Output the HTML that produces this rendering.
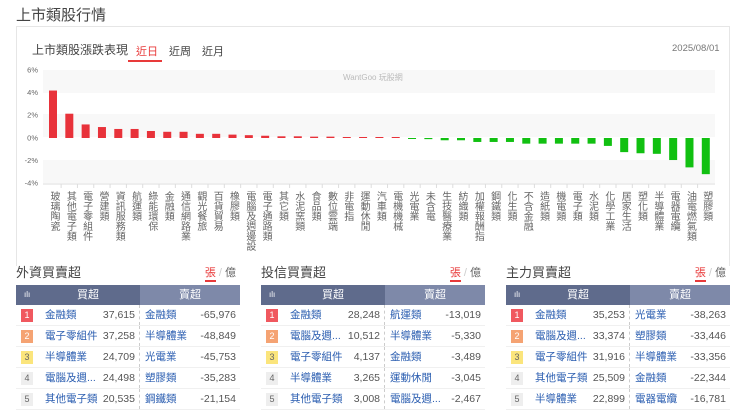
<!DOCTYPE html>
<html><head><meta charset="utf-8"><style>
*{margin:0;padding:0;box-sizing:border-box}
body{width:740px;height:419px;overflow:hidden;background:#fff;font-family:"Liberation Sans","Noto Sans CJK TC",sans-serif;color:#333;position:relative}
.abs{position:absolute}
.h1{left:16px;top:4px;font-size:15px;color:#444}
.panel{left:16px;top:26px;width:714px;height:240px;border:1px solid #e6e6e6;border-bottom:none}
.tab{font-size:11px;top:43px;color:#444}
.tbl{position:absolute;top:262px;width:224px}
.tt{font-size:13px;height:23px;line-height:22px;position:relative;color:#444}
.tt .u{position:absolute;right:4px;top:0;font-size:11px;color:#666}
.tt .u b{color:#e83a3a;font-weight:normal;border-bottom:2px solid #e83a3a;padding-bottom:1px}
.hd{display:flex;height:20px;color:#fff;font-size:11px;line-height:20px}
.hd .a{width:124px;background:#5f6b8c;position:relative;text-align:center;padding-left:20px}
.hd .a i{position:absolute;left:8px;font-style:normal;font-size:8px}
.hd .b{flex:1;background:#7e89a9;text-align:center}
.row{display:flex;height:21px;line-height:21px;font-size:10.5px;border-bottom:1px solid #f0f0f0}
.row .l{width:124px;position:relative;border-right:1px dashed #ccc}
.row .r{flex:1;position:relative}
.bd{position:absolute;left:5px;top:4px;width:12px;height:13px;line-height:13px;text-align:center;font-size:9px;color:#fff}
.n{position:absolute;left:29px;color:#2a5db0}
.v{position:absolute;right:4px;color:#555}
.r .n{left:5px}
</style></head><body>
<div class="abs h1">上市類股行情</div>
<div class="abs panel"></div>
<div class="abs" style="left:32px;top:41px;font-size:12px;color:#444">上市類股漲跌表現</div>
<div class="abs tab" style="left:136px;color:#e83a3a">近日</div>
<div class="abs" style="left:128px;top:60px;width:34px;height:2px;background:#e83a3a"></div>
<div class="abs tab" style="left:169px">近周</div>
<div class="abs tab" style="left:202px">近月</div>
<div class="abs" style="left:672px;top:43px;font-size:9.5px;color:#777">2025/08/01</div>
<svg class="abs" style="left:0;top:0" width="740" height="262" id="ch"></svg>
<div id="labs"></div>

<div class="tbl" style="left:16px"><div class="tt">外資買賣超<span class="u"><b>張</b> <span style="color:#ccc">/</span> 億</span></div>
<div class="hd"><div class="a"><i>ılı</i>買超</div><div class="b">賣超</div></div>
<div class="row"><div class="l"><span class="bd" style="background:#f0585f">1</span><span class="n">金融類</span><span class="v">37,615</span></div><div class="r"><span class="n">金融類</span><span class="v">-65,976</span></div></div>
<div class="row"><div class="l"><span class="bd" style="background:#f5a373">2</span><span class="n">電子零組件</span><span class="v">37,258</span></div><div class="r"><span class="n">半導體業</span><span class="v">-48,849</span></div></div>
<div class="row"><div class="l"><span class="bd" style="background:#fbe57c;color:#666">3</span><span class="n">半導體業</span><span class="v">24,709</span></div><div class="r"><span class="n">光電業</span><span class="v">-45,753</span></div></div>
<div class="row"><div class="l"><span class="bd" style="background:#eee;color:#666">4</span><span class="n">電腦及週...</span><span class="v">24,498</span></div><div class="r"><span class="n">塑膠類</span><span class="v">-35,283</span></div></div>
<div class="row"><div class="l"><span class="bd" style="background:#eee;color:#666">5</span><span class="n">其他電子類</span><span class="v">20,535</span></div><div class="r"><span class="n">鋼鐵類</span><span class="v">-21,154</span></div></div>
</div>

<div class="tbl" style="left:261px"><div class="tt">投信買賣超<span class="u"><b>張</b> <span style="color:#ccc">/</span> 億</span></div>
<div class="hd"><div class="a"><i>ılı</i>買超</div><div class="b">賣超</div></div>
<div class="row"><div class="l"><span class="bd" style="background:#f0585f">1</span><span class="n">金融類</span><span class="v">28,248</span></div><div class="r"><span class="n">航運類</span><span class="v">-13,019</span></div></div>
<div class="row"><div class="l"><span class="bd" style="background:#f5a373">2</span><span class="n">電腦及週...</span><span class="v">10,512</span></div><div class="r"><span class="n">半導體業</span><span class="v">-5,330</span></div></div>
<div class="row"><div class="l"><span class="bd" style="background:#fbe57c;color:#666">3</span><span class="n">電子零組件</span><span class="v">4,137</span></div><div class="r"><span class="n">金融類</span><span class="v">-3,489</span></div></div>
<div class="row"><div class="l"><span class="bd" style="background:#eee;color:#666">4</span><span class="n">半導體業</span><span class="v">3,265</span></div><div class="r"><span class="n">運動休閒</span><span class="v">-3,045</span></div></div>
<div class="row"><div class="l"><span class="bd" style="background:#eee;color:#666">5</span><span class="n">其他電子類</span><span class="v">3,008</span></div><div class="r"><span class="n">電腦及週...</span><span class="v">-2,467</span></div></div>
</div>

<div class="tbl" style="left:506px"><div class="tt">主力買賣超<span class="u"><b>張</b> <span style="color:#ccc">/</span> 億</span></div>
<div class="hd"><div class="a"><i>ılı</i>買超</div><div class="b">賣超</div></div>
<div class="row"><div class="l"><span class="bd" style="background:#f0585f">1</span><span class="n">金融類</span><span class="v">35,253</span></div><div class="r"><span class="n">光電業</span><span class="v">-38,263</span></div></div>
<div class="row"><div class="l"><span class="bd" style="background:#f5a373">2</span><span class="n">電腦及週...</span><span class="v">33,374</span></div><div class="r"><span class="n">塑膠類</span><span class="v">-33,446</span></div></div>
<div class="row"><div class="l"><span class="bd" style="background:#fbe57c;color:#666">3</span><span class="n">電子零組件</span><span class="v">31,916</span></div><div class="r"><span class="n">半導體業</span><span class="v">-33,356</span></div></div>
<div class="row"><div class="l"><span class="bd" style="background:#eee;color:#666">4</span><span class="n">其他電子類</span><span class="v">25,509</span></div><div class="r"><span class="n">金融類</span><span class="v">-22,344</span></div></div>
<div class="row"><div class="l"><span class="bd" style="background:#eee;color:#666">5</span><span class="n">半導體業</span><span class="v">22,899</span></div><div class="r"><span class="n">電器電纜</span><span class="v">-16,781</span></div></div>
</div>

<script>
var names=["玻璃陶瓷","其他電子類","電子零組件","營建類","資訊服務類","航運類","綠能環保","金融類","通信網路業","觀光餐旅","百貨貿易","橡膠類","電腦及週邊設","電子通路類","其它類","水泥窯類","食品類","數位雲端","非電指","運動休閒","汽車類","電機機械","光電業","未含電","生技醫療業","紡織類","加權報酬指","鋼鐵類","化生類","不含金融","造紙類","機電類","電子類","水泥類","化學工業","居家生活","塑化類","半導體業","電器電纜","油電燃氣類","塑膠類"];
var vals=[4.2,2.15,1.2,0.97,0.8,0.8,0.62,0.55,0.55,0.37,0.37,0.3,0.25,0.2,0.15,0.15,0.12,0.12,0.05,0.05,0.01,0,-0.08,-0.1,-0.2,-0.2,-0.35,-0.35,-0.35,-0.5,-0.5,-0.5,-0.5,-0.5,-0.7,-1.25,-1.35,-1.4,-1.95,-2.6,-3.2];
var s='',z=138,k=11.3;
[[70,93],[114,137],[160,183]].forEach(function(b){s+='<rect x="43" y="'+b[0]+'" width="672" height="'+(b[1]-b[0])+'" fill="#f8f8f8"/>';});
['6%','4%','2%','0%','-2%','-4%'].forEach(function(t,i){s+='<text x="38" y="'+(72.5+i*22.6)+'" font-size="7.5" fill="#666" text-anchor="end" font-family="Liberation Sans">'+t+'</text>';});
s+='<line x1="43" y1="184" x2="715" y2="184" stroke="#ddd"/>';
s+='<text x="343" y="80" font-size="8" fill="#bbb" font-family="Liberation Sans,Noto Sans CJK TC">WantGoo 玩股網</text>';
var L='';
for(var i=0;i<41;i++){var cx=53+i*16.32,v=vals[i],h=Math.max(Math.abs(v)*k,1);
var y=v>=0?z-h:z;
s+='<rect x="'+(cx-4)+'" y="'+y+'" width="8" height="'+h+'" fill="'+(v>=0?'#e8323a':'#11c011')+'"/>';
if(i>0)s+='<line x1="'+(cx-8.2)+'" y1="184" x2="'+(cx-8.2)+'" y2="188" stroke="#ddd"/>';
L+='<div class="abs" style="left:'+(cx-6)+'px;top:191px;writing-mode:vertical-rl;font-size:10px;line-height:12px;color:#666">'+names[i]+'</div>';}
document.getElementById('ch').innerHTML=s;document.getElementById('labs').innerHTML=L;
</script>
</body></html>
